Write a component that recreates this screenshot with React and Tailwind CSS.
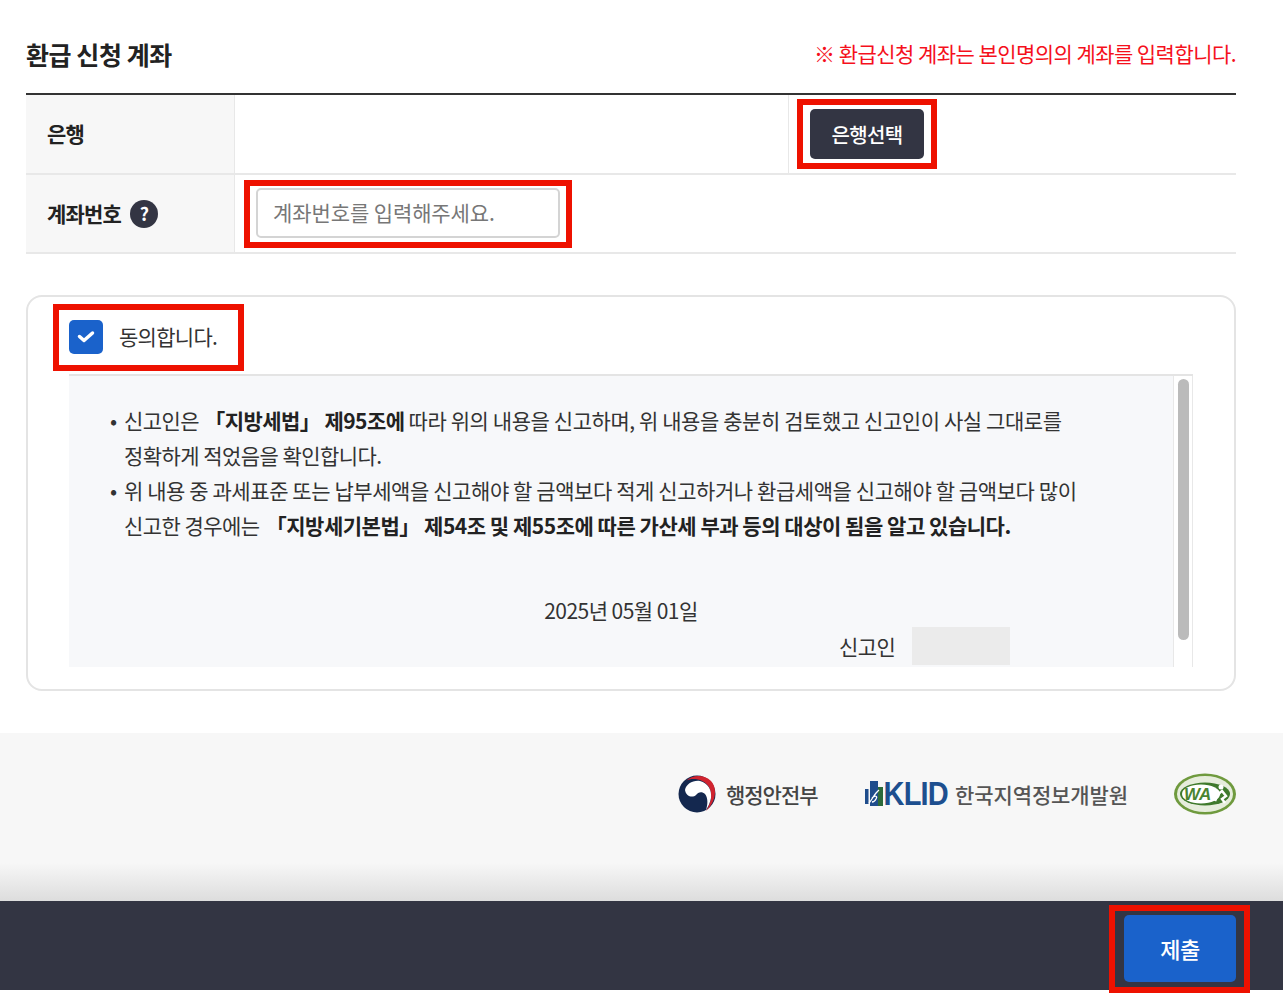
import React from 'react';

const RedBox = ({ className }) => (
  <span className={`absolute border-[6px] border-[#ee1100] pointer-events-none ${className}`} />
);

const HelpBadge = () => (
  <span className="ml-[9px] flex h-[28px] w-[28px] items-center justify-center rounded-full bg-[#333543] text-[18px] font-bold text-white">?</span>
);

const GovLogo = () => (
  <div className="flex items-center gap-[10px]">
    <svg width="38" height="38" viewBox="0 0 38 38">
      <circle cx="19" cy="19" r="18.500" fill="#14284f" />
      <path d="M8 6C14 0 26 -1 33 6C39 12 39 26 28 36C33 28 35 20 31 12C26 4 14 2 8 6Z" fill="#d0232f" />
      <path d="M7 15C8 9 15 5 22 6C30 8 34 15 33 23C32 28 30 32 28 35C30 29 30 23 27 19C24 16 20 17 18 20C15 23 8 22 7 15Z" fill="#ffffff" />
    </svg>
    <span className="text-[21px] font-medium tracking-[-1px] text-[#444444] leading-none">행정안전부</span>
  </div>
);

const KlidLogo = () => (
  <div className="flex items-center">
    <svg width="19" height="26" viewBox="0 0 19 26">
      <rect x="0" y="8" width="3.500" height="15" fill="#1f4d8c" />
      <rect x="5" y="0" width="8" height="25" fill="#1f4d8c" />
      <rect x="13" y="6" width="5" height="19" fill="#2d6a3a" />
      <path d="M4 22C7 19 9 13 14 9M7 17C10 14 13 15 11 18C10 20 8 21 7 21" stroke="#ffffff" strokeWidth="1.300" fill="none" />
    </svg>
    <span className="font-['Liberation_Sans',sans-serif] text-[29px] font-bold leading-none tracking-[-0.8px] text-[#1d4f8f] scale-y-[1.15]">KLID</span>
    <span className="ml-[7px] text-[21px] font-medium tracking-[-0.1px] text-[#555555] leading-none">한국지역정보개발원</span>
  </div>
);

const WaLogo = () => (
  <svg width="62" height="42" viewBox="0 0 62 42">
    <ellipse cx="31" cy="21" rx="31" ry="20.500" fill="#6f9a3e" />
    <ellipse cx="31" cy="21" rx="28" ry="18" fill="#e6eddc" />
    <ellipse cx="31" cy="21" rx="25" ry="11.500" fill="#3f7a2c" />
    <ellipse cx="27" cy="21" rx="19" ry="9.500" fill="#ffffff" />
    <text x="10" y="27" fontFamily="Liberation Sans" fontSize="17" fontWeight="700" fontStyle="italic" fill="#4a8430">WA</text>
    <circle cx="47" cy="14" r="2.500" fill="#ffffff" />
    <path d="M41 28C43 23 45 20 48 18L52 23L48 26L51 30" stroke="#ffffff" strokeWidth="2.500" fill="none" />
  </svg>
);

const App = () => {
  return (
    <div className="flex h-[993px] flex-col overflow-hidden bg-white font-['Noto_Sans_CJK_KR','Noto_Sans',sans-serif] text-[21px] text-[#222222]">
      <div className="flex-1 pl-[26px] pr-[47px]">
        <div className="flex h-[93px] items-start justify-between pt-[35px]">
          <h2 className="text-[25px] font-bold leading-[38px] tracking-[-0.45px] text-[#222222]">환급 신청 계좌</h2>
          <p className="pt-[1px] text-[21px] leading-[34px] tracking-[-0.55px] text-[#f5101c]">※ 환급신청 계좌는 본인명의의 계좌를 입력합니다.</p>
        </div>

        <div className="border-t-2 border-[#333333]">
          <div className="flex h-[80px] border-b-2 border-[#e8e8e8]">
            <div className="flex w-[209px] items-center border-r border-[#e8e8e8] bg-[#f7f7f7] pl-[21px] font-bold tracking-[-0.8px]">은행</div>
            <div className="w-[554px] border-r border-[#e8e8e8]" />
            <div className="flex flex-1 items-center pl-[21px]">
              <div className="relative">
                <button className="h-[50px] w-[114px] rounded-[5px] bg-[#333543] pt-[1px] text-[20px] font-medium tracking-[-0.7px] text-white">은행선택</button>
                <RedBox className="-inset-x-[13px] -inset-y-[10px]" />
              </div>
            </div>
          </div>
          <div className="flex h-[79px] border-b-2 border-[#e8e8e8]">
            <div className="flex w-[209px] items-center border-r border-[#e8e8e8] bg-[#f7f7f7] pl-[21px] font-bold tracking-[-0.8px]">
              계좌번호
              <HelpBadge />
            </div>
            <div className="flex flex-1 items-center pl-[21px]">
              <div className="relative mb-[2px]">
                <input
                  readOnly
                  placeholder="계좌번호를 입력해주세요."
                  className="block h-[50px] w-[304px] rounded-[5px] border-2 border-[#d4d4d4] bg-white pb-[2px] pl-[15px] text-[21px] tracking-[-0.1px] placeholder:text-[#777777]"
                />
                <RedBox className="-inset-x-[12px] -top-[8px] -bottom-[10px]" />
              </div>
            </div>
          </div>
        </div>

        <div className="mt-[41px] h-[396px] rounded-[16px] border-2 border-[#e4e4e4] px-[41px] pt-[23px]">
          <div className="relative flex h-[34px] items-center">
            <span className="flex h-[34px] w-[34px] items-center justify-center rounded-[5px] bg-[#1a62cb]">
              <svg width="18" height="14" viewBox="0 0 18 14" fill="none">
                <path d="M2.500 6.500L7 10.500L15.500 3" stroke="#ffffff" strokeWidth="3.500" strokeLinecap="round" strokeLinejoin="round" />
              </svg>
            </span>
            <span className="ml-[16px] tracking-[-0.7px] text-[#333333]">동의합니다.</span>
            <RedBox className="-left-[16px] -top-[16px] -bottom-[17px] w-[191px]" />
          </div>

          <div className="mt-[20px] flex h-[293px] border-t-2 border-[#e4e4e4]">
            <div className="flex-1 overflow-hidden bg-[#f7f8fa] px-[39px] pt-[27px] leading-[35px] tracking-[-0.55px] text-[#333333]">
              <div className="relative whitespace-nowrap pl-[16px]">
                <span className="absolute left-[2px]">•</span>
                신고인은 <b className="ml-[1px] text-[#222222]">「지방세법」 제95조에</b> <span className="tracking-[-0.42px]">따라 위의 내용을 신고하며, 위 내용을 충분히 검토했고 신고인이 사실 그대로를</span>
                <br />
                정확하게 적었음을 확인합니다.
              </div>
              <div className="relative whitespace-nowrap pl-[16px]">
                <span className="absolute left-[2px]">•</span>
                <span className="tracking-[-0.42px]">위 내용 중 과세표준 또는 납부세액을 신고해야 할 금액보다 적게 신고하거나 환급세액을 신고해야 할 금액보다 많이</span>
                <br />
                신고한 경우에는 <b className="ml-[2px] tracking-[-0.48px] text-[#222222]">「지방세기본법」 제54조 및 제55조에 따른 가산세 부과 등의 대상이 됨을 알고 있습니다.</b>
              </div>
              <p className="mt-[50px] text-center">2025년 05월 01일</p>
              <div className="-mt-[1px] flex items-center pl-[731px]">
                <span>신고인</span>
                <span className="ml-[17px] h-[38px] w-[98px] bg-[#ebebeb]" />
              </div>
            </div>
            <div className="w-[20px] border-x border-[#e8e8e8] bg-white pl-[4px] pt-[3px]">
              <div className="h-[261px] w-[11px] rounded-full bg-[#bbbbbb]" />
            </div>
          </div>
        </div>
      </div>

      <footer className="flex h-[168px] items-start justify-end bg-[linear-gradient(to_bottom,#f7f7f7_0,#f7f7f7_130px,#dddddd_168px)] pr-[47px] pt-[40px]">
        <div className="flex items-center">
          <GovLogo />
          <div className="ml-[47px]"><KlidLogo /></div>
          <div className="ml-[46px]"><WaLogo /></div>
        </div>
      </footer>

      <div className="flex h-[89px] items-start justify-end bg-[#333543] pr-[47px] pt-[14px]">
        <div className="relative">
          <button className="h-[67px] w-[112px] rounded-[5px] bg-[#1a62cb] text-[22px] font-medium tracking-[-0.5px] text-white">제출</button>
          <RedBox className="-left-[15px] -right-[14px] -top-[10px] -bottom-[11px]" />
        </div>
      </div>
      <div className="h-[3px] bg-white" />
    </div>
  );
};

export default App;
